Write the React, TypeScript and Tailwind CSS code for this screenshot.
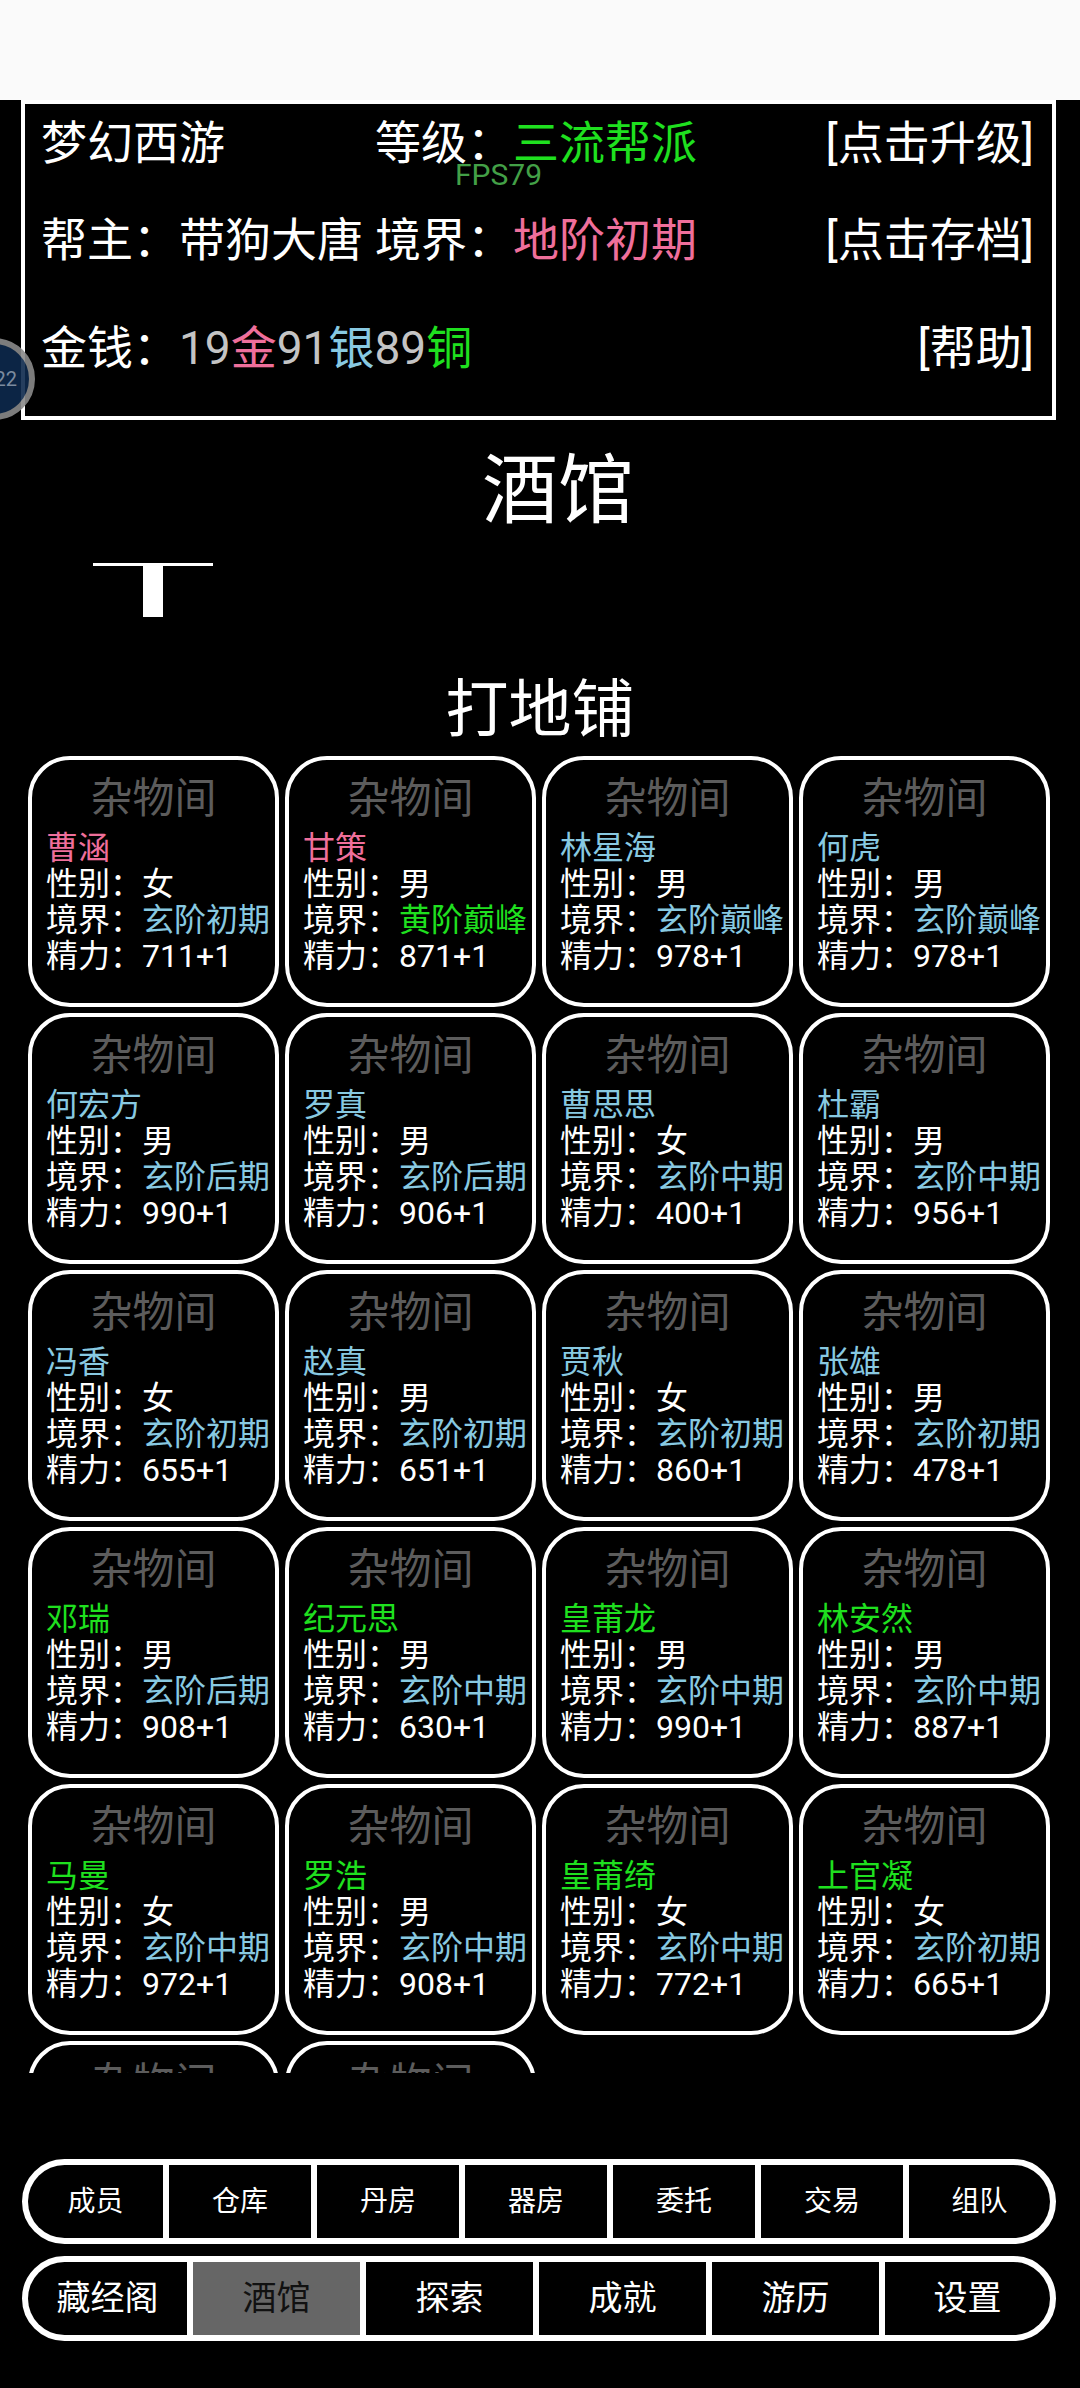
import React from 'react'

type Tone = 'pink' | 'blue' | 'green'

const TONE: Record<Tone, string> = {
  pink: 'text-[#ef6f9b]',
  blue: 'text-[#88c9e1]',
  green: 'text-[#1fe01f]',
}

type Guest = { name: string; tone: Tone; sex: string; realm: string; realmTone: Tone; energy: string }

const GUESTS: Guest[] = [
  { name: '曹涵', tone: 'pink', sex: '女', realm: '玄阶初期', realmTone: 'blue', energy: '711+1' },
  { name: '甘策', tone: 'pink', sex: '男', realm: '黄阶巅峰', realmTone: 'green', energy: '871+1' },
  { name: '林星海', tone: 'blue', sex: '男', realm: '玄阶巅峰', realmTone: 'blue', energy: '978+1' },
  { name: '何虎', tone: 'blue', sex: '男', realm: '玄阶巅峰', realmTone: 'blue', energy: '978+1' },
  { name: '何宏方', tone: 'blue', sex: '男', realm: '玄阶后期', realmTone: 'blue', energy: '990+1' },
  { name: '罗真', tone: 'blue', sex: '男', realm: '玄阶后期', realmTone: 'blue', energy: '906+1' },
  { name: '曹思思', tone: 'blue', sex: '女', realm: '玄阶中期', realmTone: 'blue', energy: '400+1' },
  { name: '杜霸', tone: 'blue', sex: '男', realm: '玄阶中期', realmTone: 'blue', energy: '956+1' },
  { name: '冯香', tone: 'blue', sex: '女', realm: '玄阶初期', realmTone: 'blue', energy: '655+1' },
  { name: '赵真', tone: 'blue', sex: '男', realm: '玄阶初期', realmTone: 'blue', energy: '651+1' },
  { name: '贾秋', tone: 'blue', sex: '女', realm: '玄阶初期', realmTone: 'blue', energy: '860+1' },
  { name: '张雄', tone: 'blue', sex: '男', realm: '玄阶初期', realmTone: 'blue', energy: '478+1' },
  { name: '邓瑞', tone: 'green', sex: '男', realm: '玄阶后期', realmTone: 'blue', energy: '908+1' },
  { name: '纪元思', tone: 'green', sex: '男', realm: '玄阶中期', realmTone: 'blue', energy: '630+1' },
  { name: '皇莆龙', tone: 'green', sex: '男', realm: '玄阶中期', realmTone: 'blue', energy: '990+1' },
  { name: '林安然', tone: 'green', sex: '男', realm: '玄阶中期', realmTone: 'blue', energy: '887+1' },
  { name: '马曼', tone: 'green', sex: '女', realm: '玄阶中期', realmTone: 'blue', energy: '972+1' },
  { name: '罗浩', tone: 'green', sex: '男', realm: '玄阶中期', realmTone: 'blue', energy: '908+1' },
  { name: '皇莆绮', tone: 'green', sex: '女', realm: '玄阶中期', realmTone: 'blue', energy: '772+1' },
  { name: '上官凝', tone: 'green', sex: '女', realm: '玄阶初期', realmTone: 'blue', energy: '665+1' },
  { name: '王成', tone: 'green', sex: '男', realm: '黄阶巅峰', realmTone: 'green', energy: '612+1' },
  { name: '李青', tone: 'green', sex: '女', realm: '黄阶巅峰', realmTone: 'green', energy: '598+1' },
]

// widths follow the reference: end cells are a little narrower than the middle ones
const NAV_TOP = [
  { label: '成员', w: 'w-[135px]' },
  { label: '仓库', w: 'w-[142px]' },
  { label: '丹房', w: 'w-[142px]' },
  { label: '器房', w: 'w-[142px]' },
  { label: '委托', w: 'w-[142px]' },
  { label: '交易', w: 'w-[142px]' },
  { label: '组队', w: 'flex-1' },
]
const NAV_BOTTOM = [
  { label: '藏经阁', w: 'w-[159px]' },
  { label: '酒馆', w: 'w-[167px]' },
  { label: '探索', w: 'w-[167px]' },
  { label: '成就', w: 'w-[167px]' },
  { label: '游历', w: 'w-[167px]' },
  { label: '设置', w: 'flex-1' },
]

function GuestCard({ g }: { g: Guest }) {
  return (
    <div className="h-[251px] rounded-[42px] border-4 border-white bg-black pl-[14px] whitespace-nowrap">
      <div className="mt-[17px] h-[44px] pr-[14px] text-center text-[42px] leading-[44px] text-[#5c5c5c]">杂物间</div>
      <div className="mt-[9px] text-[32px] leading-[36px]">
        <div className={TONE[g.tone]}>{g.name}</div>
        <div className="text-white">性别：{g.sex}</div>
        <div className="text-white">
          境界：<span className={TONE[g.realmTone]}>{g.realm}</span>
        </div>
        <div className="text-white">精力：{g.energy}</div>
      </div>
    </div>
  )
}

export default function App() {
  return (
    <div className="relative h-[2388px] w-[1080px] overflow-hidden bg-black font-['Roboto','Noto_Sans_CJK_SC',sans-serif] text-white">
      {/* status bar strip */}
      <div className="h-[100px] bg-[#fafafa]" />

      {/* guild info box */}
      <div className="relative ml-[21px] h-[320px] w-[1035px] border-4 border-white text-[46px] leading-none">
        <div className="flex h-[78px] items-center pl-[16px] pr-[18px]">
          <span className="w-[334px]">梦幻西游</span>
          <span>等级：</span>
          <span className="text-[#1fe01f]">三流帮派</span>
          <span className="ml-auto">[点击升级]</span>
        </div>
        <div className="flex h-[116px] items-center pl-[16px] pr-[18px]">
          <span className="w-[334px]">帮主：带狗大唐</span>
          <span>境界：</span>
          <span className="text-[#ef6f9b]">地阶初期</span>
          <span className="ml-auto">[点击存档]</span>
        </div>
        <div className="flex h-[100px] items-center pl-[16px] pr-[18px]">
          <span>金钱：</span>
          <span className="text-[#c4c4c4]">19</span>
          <span className="text-[#ef6f9b]">金</span>
          <span className="text-[#c4c4c4]">91</span>
          <span className="text-[#88c9e1]">银</span>
          <span className="text-[#c4c4c4]">89</span>
          <span className="text-[#1fe01f]">铜</span>
          <span className="ml-auto">[帮助]</span>
        </div>
        <div className="absolute left-[430px] top-[56px] text-[30px] leading-[30px] text-[#43a047]">FPS79</div>
      </div>

      {/* floating badge */}
      <div className="absolute left-[-47px] top-[338px] flex h-[82px] w-[82px] items-center justify-end rounded-full border-[6px] border-[#8a8a8a] bg-[#0e2a4d] pr-[12px] text-[20px] text-[#8a9bb0] opacity-90">
        22
      </div>

      {/* title */}
      <div className="mt-[21px] h-[100px] pl-[36px] text-center text-[76px] leading-[100px]">酒馆</div>

      {/* slider mark */}
      <div className="ml-[93px] mt-[22px] flex w-[120px] flex-col">
        <div className="h-[3px] bg-white" />
        <div className="ml-[50px] h-[51px] w-[20px] bg-white" />
      </div>

      <div className="mt-[53px] h-[80px] text-center text-[63px] leading-[80px]">打地铺</div>

      {/* guest grid */}
      <div className="h-[1323px] overflow-hidden pl-[28px] pt-[6px]">
        <div className="grid w-[1022px] grid-cols-4 gap-[6px]">
          {GUESTS.map((g, i) => (
            <GuestCard key={i} g={g} />
          ))}
        </div>
      </div>

      {/* bottom menus */}
      <div className="ml-[22px] mt-[86px] flex h-[85px] w-[1034px] gap-[6px] overflow-hidden rounded-full border-[6px] border-white bg-white">
        {NAV_TOP.map(t => (
          <div key={t.label} className={`${t.w} flex items-center justify-center bg-black text-[28px]`}>
            {t.label}
          </div>
        ))}
      </div>
      <div className="ml-[22px] mt-[12px] flex h-[85px] w-[1034px] gap-[6px] overflow-hidden rounded-full border-[6px] border-white bg-white">
        {NAV_BOTTOM.map(t => (
          <div
            key={t.label}
            className={`${t.w} flex items-center justify-center text-[34px] ${
              t.label === '酒馆' ? 'bg-[#666666] text-[#111111]' : 'bg-black'
            }`}
          >
            {t.label}
          </div>
        ))}
      </div>
    </div>
  )
}
